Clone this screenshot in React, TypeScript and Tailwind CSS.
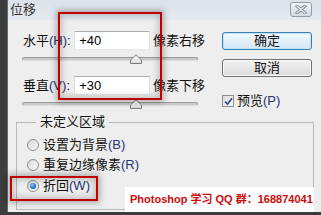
import React from "react";

const cjk = { fontFamily: '"Liberation Sans", "Noto Sans CJK SC", sans-serif' };

function Slider({ pos }: { pos: number }) {
  return (
    <div className="relative h-[10px] w-[176px]">
      <div className="absolute left-0 right-0 top-[3px] h-[4px] rounded-[2px] border border-[#9c9c9c] border-b-[#dedede] bg-[#c9c9c9]" />
      <svg className="absolute top-[0px]" style={{ left: pos - 6 }} width="12" height="10" viewBox="0 0 12 10">
        <defs>
          <linearGradient id="th" x1="0" y1="0" x2="0" y2="1">
            <stop offset="0" stopColor="#fbfbfb" />
            <stop offset="1" stopColor="#d9d9d9" />
          </linearGradient>
        </defs>
        <path d="M0.5 9.5 V6 L6 0.8 L11.5 6 V9.5 Z" fill="url(#th)" stroke="#7d7d7d" strokeWidth="1" />
      </svg>
    </div>
  );
}

function Field({ label, hot, value, suffix }: { label: string; hot: string; value: string; suffix: string }) {
  return (
    <div className="flex h-[19px] items-center text-[13px] text-[#111]" style={cjk}>
      <span className="ml-[1px] w-[52px] whitespace-nowrap">
        {label}
        <span className="text-[#24346e]">({hot})</span>:
      </span>
      <div className="flex h-[19px] w-[77px] items-center border border-[#abadb3] border-x-[#dbdfe6] border-b-[#e3e9ef] bg-white pl-[4px] text-[13px] text-black">
        {value}
      </div>
      <span className="ml-[3px] whitespace-nowrap">{suffix}</span>
    </div>
  );
}

function Radio({ checked, label, hot }: { checked?: boolean; label: string; hot: string }) {
  return (
    <div className="flex h-[16px] items-center text-[13px] text-[#111]" style={cjk}>
      <div className="flex h-[12px] w-[12px] items-center justify-center rounded-full border border-[#8e8f8f] bg-gradient-to-br from-[#d8d8d8] to-[#fafafa]">
        {checked && (
          <div className="h-[6px] w-[6px] rounded-full bg-[radial-gradient(circle_at_40%_35%,#8fd0ff,#1a6cc4_60%,#0b3f86)]" />
        )}
      </div>
      <span className="ml-[4px] whitespace-nowrap">
        {label}
        <span className="text-[#24346e]">({hot})</span>
      </span>
    </div>
  );
}

export default function App() {
  return (
    <div className="relative flex h-[215px] w-[321px] flex-col overflow-hidden bg-[#3b3b3b]">
      <div className="flex flex-1">
        <div className="w-[7px] bg-[#3d3d3d]" />
        <div className="flex flex-1 flex-col border-l border-[#6b6b6b] bg-[#eeeeee]">
          {/* title bar */}
          <div className="flex h-[20px] items-start bg-gradient-to-b from-[#dbe2ea] to-[#e5eaf0]">
            <span className="ml-[2px] mt-[2px] text-[13px] leading-[16px] text-[#363636]" style={cjk}>
              位移
            </span>
            <div className="ml-auto mr-[9px] mt-[2px] flex h-[15px] w-[22px] items-center justify-center rounded-[3px] border border-[#8d9bab] bg-gradient-to-b from-[#f3f5f8] to-[#d3dae3]">
              <svg width="12" height="9" viewBox="0 0 12 9">
                <path d="M2 1 L10 8 M10 1 L2 8" stroke="#7d8794" strokeWidth="3" strokeLinecap="square" />
                <path d="M2 1 L10 8 M10 1 L2 8" stroke="#f5f7fa" strokeWidth="1.2" strokeLinecap="square" />
              </svg>
            </div>
          </div>

          {/* body */}
          <div className="flex flex-1 flex-col">
            <div className="ml-[14px] mt-[11px] flex">
              <div className="flex w-[183px] flex-col">
                <Field label="水平" hot="H" value="+40" suffix="像素右移" />
                <div className="mt-[4px]">
                  <Slider pos={114} />
                </div>
                <div className="mt-[12px]">
                  <Field label="垂直" hot="V" value="+30" suffix="像素下移" />
                </div>
                <div className="mt-[4px]">
                  <Slider pos={114} />
                </div>
              </div>
              <div className="ml-[17px] flex w-[90px] flex-col">
                <button
                  className="mt-[1px] flex h-[18px] items-center justify-center rounded-[3px] border border-[#3c7fb1] bg-gradient-to-b from-[#f2f8fc] to-[#d3e7f5] text-[13px] text-[#111] shadow-[inset_0_0_0_1px_#bfe3f7]"
                  style={cjk}
                >
                  确定
                </button>
                <button
                  className="mt-[9px] flex h-[18px] items-center justify-center rounded-[3px] border border-[#707070] bg-gradient-to-b from-[#f3f3f3] to-[#dadada] text-[13px] text-[#111] shadow-[inset_0_0_0_1px_#fbfbfb]"
                  style={cjk}
                >
                  取消
                </button>
                <div className="mt-[17px] flex h-[14px] items-center text-[13px] text-[#111]" style={cjk}>
                  <div className="flex h-[12px] w-[12px] items-center justify-center border border-[#8e8f8f] bg-gradient-to-br from-[#dcdcdc] to-[#f8f8f8]">
                    <svg width="9" height="9" viewBox="0 0 9 9">
                      <path d="M1 4.5 L3.5 7.2 L8 1.2" stroke="#3a4f8c" strokeWidth="1.8" fill="none" />
                    </svg>
                  </div>
                  <span className="ml-[3px]">
                    预览<span className="text-[#24346e]">(P)</span>
                  </span>
                </div>
              </div>
            </div>

            <fieldset className="ml-[8px] mt-[5px] h-[96px] w-[298px] border border-[#b9b9b9]">
              <legend className="ml-[19px] px-[4px] text-[13px] leading-[16px] text-[#111]" style={cjk}>
                未定义区域
              </legend>
              <div className="ml-[10px] mt-[7px] flex flex-col gap-[4px]">
                <Radio label="设置为背景" hot="B" />
                <Radio label="重复边缘像素" hot="R" />
                <div className="mt-[1px]">
                  <Radio checked label="折回" hot="W" />
                </div>
              </div>
            </fieldset>
          </div>
        </div>
      </div>
      <div className="h-[3px] bg-[#3b3b3b]" />

      {/* annotations */}
      <div className="absolute left-[58px] top-[12px] h-[88px] w-[104px] border-2 border-[#c00000] shadow-[0_0_6px_2px_rgba(0,0,0,0.28),inset_0_0_6px_2px_rgba(0,0,0,0.2)]" />
      <div className="absolute left-[10px] top-[176px] h-[25px] w-[88px] border-2 border-[#c00000] shadow-[0_0_6px_2px_rgba(0,0,0,0.28),inset_0_0_6px_2px_rgba(0,0,0,0.2)]" />
      <div
        className="absolute left-[125px] top-[187px] flex h-[25px] w-[189px] items-center bg-white pl-[5px] text-[11px] font-bold whitespace-nowrap text-[#cc0a0a]"
        style={cjk}
      >
        Photoshop 学习 QQ 群：168874041
      </div>
    </div>
  );
}
